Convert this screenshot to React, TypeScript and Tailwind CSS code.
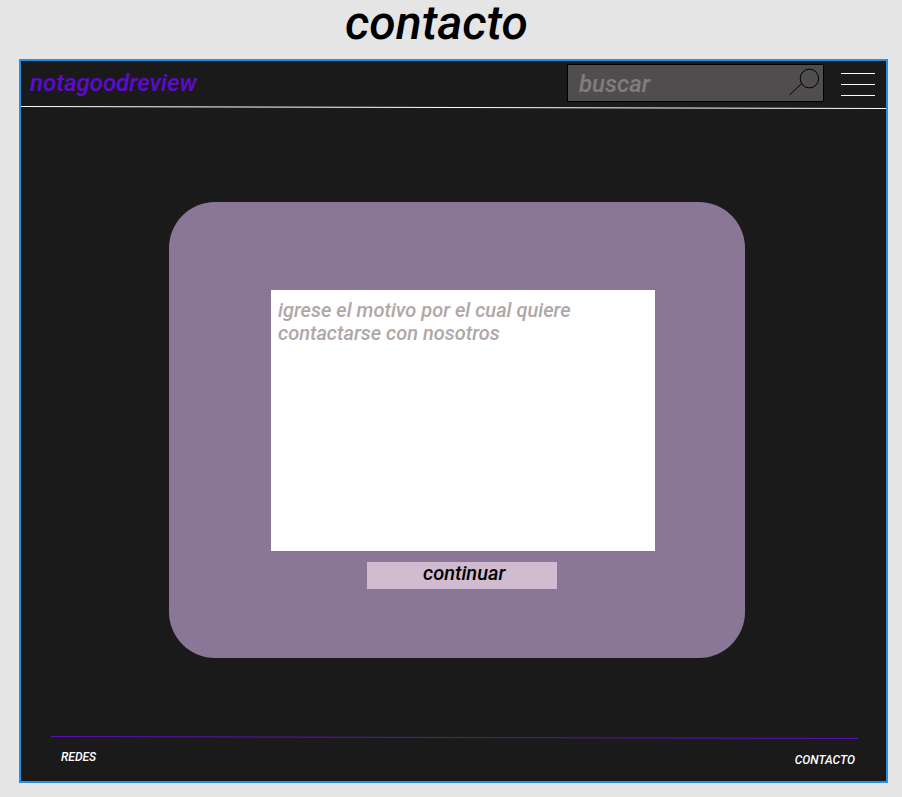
function SearchIcon() {
  return (
    <svg width="32" height="28" viewBox="0 0 32 28" fill="none" stroke="#000" strokeWidth="1">
      <ellipse cx="21.4" cy="10.5" rx="9.2" ry="9.4" />
      <path d="M13.7 15.6 1.4 27" />
    </svg>
  );
}

function Header() {
  return (
    <header className="flex h-11 items-start">
      <a className="ml-[9px] mt-2 text-2xl leading-7 text-[#5e0bd0]">notagoodreview</a>
      <div className="ml-auto mt-[3px] flex h-[38px] w-[257px] items-start justify-between border border-black bg-[#504d4e] pl-[11px] pr-[3px]">
        <span className="mt-[5px] text-2xl leading-7 text-[#817d7e]">buscar</span>
        <div className="mt-[3px]">
          <SearchIcon />
        </div>
      </div>
      <button className="ml-[17px] mr-[11px] mt-3 flex w-[34px] flex-col gap-2.5">
        <span className="h-px w-full bg-white" />
        <span className="h-px w-full bg-white" />
        <span className="h-px w-full bg-white" />
      </button>
    </header>
  );
}

export default function App() {
  return (
    <div className="h-[797px] w-[902px] bg-[#e5e5e5] font-['Roboto',sans-serif] font-medium italic">
      <h1 className="h-[59px] pl-[345px] text-5xl leading-[46px] text-black">contacto</h1>
      <div className="ml-[19px] flex h-[724px] w-[869px] flex-col border-2 border-[#2490e4] bg-[#1a1a1a]">
        <Header />
        <svg className="h-1 w-full shrink-0" viewBox="0 0 865 4" stroke="#fff">
          <path d="M0 1.5 865 3.5" />
        </svg>
        <main className="ml-[148px] mt-[93px] flex h-[456px] w-[576px] flex-col rounded-[46px] bg-[#8a7697] pt-[88px]">
          <div className="ml-[102px] h-[261px] w-[384px] bg-white pl-[7px] pt-[9px] text-xl leading-[23px] text-[#b0a7a7]">
            igrese el motivo por el cual quiere
            <br />
            contactarse con nosotros
          </div>
          <button className="ml-[198px] mt-[11px] flex h-[27px] w-[190px] bg-[#d1bbd1] pl-14 text-xl leading-[23px] text-black">
            continuar
          </button>
        </main>
        <footer className="ml-[30px] mt-[77px] w-[807px]">
          <svg className="h-[5px] w-full" viewBox="0 0 807 5" stroke="#5c10b8">
            <path d="M0 1.5 807 3.5" />
          </svg>
          <div className="flex justify-between pl-2.5 pr-[3px] text-xs leading-[14px] text-white">
            <a className="mt-[10px]">REDES</a>
            <a className="mt-[13px]">CONTACTO</a>
          </div>
        </footer>
      </div>
    </div>
  );
}
